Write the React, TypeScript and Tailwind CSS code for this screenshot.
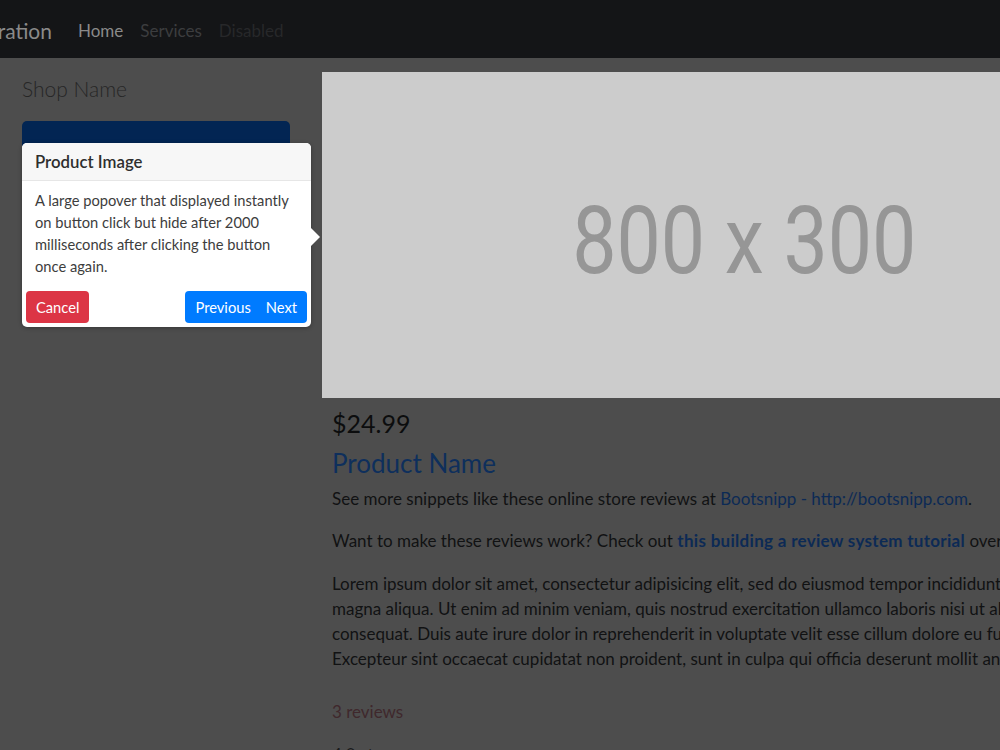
import React from "react";

const F = "font-['Lato','Noto_Sans',sans-serif]";

export default function App() {
  return (
    <div className={`relative w-[1000px] h-[750px] overflow-hidden bg-[#4d4d4d] ${F}`}>
      {/* Navbar */}
      <nav className="h-[58px] bg-[#141517] flex items-center pt-[3px]">
        <div className="w-[52px] flex justify-end whitespace-nowrap text-[21px] text-[#8a8a8a]">
          Integration
        </div>
        <ul className="flex items-center ml-[26px] gap-[17px] text-[17px]">
          <li className="text-[#8a8a8a]">Home</li>
          <li className="text-[#3c3d3f]">Services</li>
          <li className="text-[#27282a]">Disabled</li>
        </ul>
      </nav>

      <div className="flex">
        {/* Sidebar */}
        <aside className="w-[322px] shrink-0 pl-[22px] pr-[32px]">
          <h1 className="mt-[15px] text-[21px] leading-[32px] font-light text-[#262626]">Shop Name</h1>
          <div className="mt-[16px] h-[52px] rounded-t-[5px] bg-[#022553]" />
        </aside>

        {/* Main */}
        <main className="flex-1 min-w-0">
          <div className="mt-[14px] w-[845px] h-[326px] bg-[#cccccc] flex items-center justify-center">
            <span className="mt-[10px] font-['Roboto',sans-serif] text-[95px] leading-none text-[#969696] scale-x-[0.83] whitespace-nowrap">
              800 x 300
            </span>
          </div>
          <div className="pl-[10px] whitespace-nowrap text-[17px] leading-[25.3px] text-[#111213]">
            <h3 className="mt-[11px] text-[25px] leading-[29px] text-[#0c0d0e]">$24.99</h3>
            <h4 className="mt-[10px] text-[26px] leading-[30px] text-[#0e2f5c]">Product Name</h4>
            <p className="mt-[8px]">
              See more snippets like these online store reviews at{" "}
              <span className="text-[#0c2a55]">Bootsnipp - http://bootsnipp.com</span>.
            </p>
            <p className="mt-[17px]">
              Want to make these reviews work? Check out{" "}
              <span className="font-bold tracking-[0.3px] text-[#0c2a55]">this building a review system tutorial</span> over at
              maxoffsky.com!
            </p>
            <p className="mt-[17px]">
              Lorem ipsum dolor sit amet, consectetur adipisicing elit, sed do eiusmod tempor incididunt ut labore et dolore
              <br />
              magna aliqua. Ut enim ad minim veniam, quis nostrud exercitation ullamco laboris nisi ut aliquip ex ea commodo
              <br />
              consequat. Duis aute irure dolor in reprehenderit in voluptate velit esse cillum dolore eu fugiat nulla pariatur.
              <br />
              Excepteur sint occaecat cupidatat non proident, sunt in culpa qui officia deserunt mollit anim id est laborum.
            </p>
            <p className="mt-[27px] text-[#3f282c]">3 reviews</p>
            <p className="mt-[18px] text-[#1a1b1c]">4.0 stars</p>
          </div>
        </main>
      </div>

      {/* Popover */}
      <div className="absolute left-[22px] top-[143px] w-[289px] h-[184px] bg-white rounded-[5px] shadow-[0_1px_4px_rgba(0,0,0,0.3)] flex flex-col">
        <div className="h-[38px] bg-[#f7f7f7] border-b border-[#e6e6e6] rounded-t-[5px] flex items-center px-[13px] text-[16.8px] font-semibold text-[#2e2e2e]">
          Product Image
        </div>
        <div className="px-[13px] pt-[8px] text-[14.7px] leading-[22px] text-[#3d3d3d]">
          A large popover that displayed instantly on button click but hide after 2000 milliseconds after clicking the
          button once again.
        </div>
        <div className="mt-auto mb-[4px] px-[4px] flex justify-between">
          <button className="h-[32px] px-[10px] rounded-[4px] bg-[#dc3545] text-white text-[14.7px]">Cancel</button>
          <div className="h-[32px] px-[10px] rounded-[4px] bg-[#007bff] text-white text-[14.7px] flex items-center gap-[15px]">
            <span>Previous</span>
            <span>Next</span>
          </div>
        </div>
        <div className="absolute right-[-9px] top-[85px] w-0 h-0 border-y-[9px] border-y-transparent border-l-[9px] border-l-white" />
      </div>
    </div>
  );
}
